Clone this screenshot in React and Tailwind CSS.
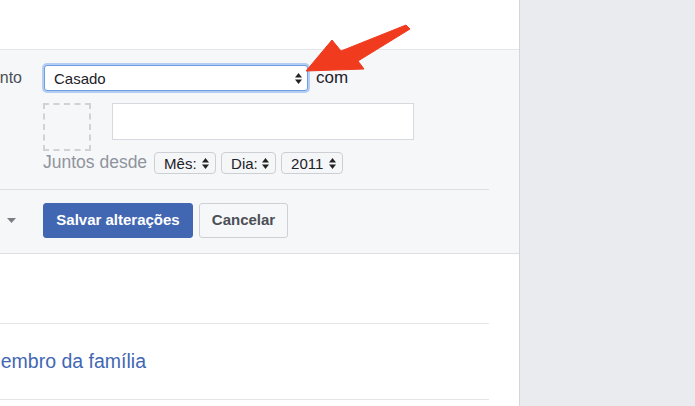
import React from "react";

function Stepper({ className = "" }) {
  return (
    <svg width="7" height="11" viewBox="0 0 7 11" className={className}>
      <path d="M0 4.5 L3.5 0 L7 4.5 Z" fill="#222" />
      <path d="M0 6.5 L3.5 11 L7 6.5 Z" fill="#222" />
    </svg>
  );
}

function SmallSelect({ label, w }) {
  return (
    <div
      className={`flex h-[22px] items-center justify-between rounded-[4px] border border-[#ccd0d5] bg-[#f5f6f7] pl-[9px] pr-[6px] text-[15px] leading-none text-[#1d2129] ${w}`}
    >
      <span>{label}</span>
      <Stepper />
    </div>
  );
}

export default function App() {
  return (
    <div className="relative flex h-[406px] w-[695px] overflow-hidden bg-[#e9ebee] font-['Liberation_Sans',Arial,sans-serif]">
      <div className="flex w-[520px] shrink-0 flex-col border-r border-[#d3d6db] bg-white">
        <div className="h-[50px] shrink-0 border-b border-[#e5e6e9]" />

        <div className="border-b border-[#dddfe2] bg-[#f6f7f9] pr-[30px]">
          <div className="flex pt-[15px]">
            <div className="flex h-[26px] w-[44px] shrink-0 items-center justify-end whitespace-nowrap pr-[22px] text-[16px] text-[#4b4f56]">
              Status de relacionamento
            </div>
            <div className="flex flex-col">
              <div className="flex items-center">
                <div className="flex h-[26px] w-[264px] items-center justify-between rounded-[3px] border border-[#6f9de3] bg-white pl-[9px] pr-[5px] text-[15px] leading-none text-[#1d2129] shadow-[0_0_0_2px_#b4cdf2]">
                  <span>Casado</span>
                  <Stepper />
                </div>
                <span className="ml-[8px] -mt-[2px] text-[17px] leading-none text-[#1d2129]">com</span>
              </div>
            </div>
          </div>

          <div className="flex pl-[43px] pt-[12px]">
            <div className="h-[48px] w-[48px] shrink-0 border-2 border-dashed border-[#d0d2d6]" />
            <div className="ml-[21px] h-[37px] w-[302px] border border-[#d6d9dd] bg-white" />
          </div>

          <div className="flex items-center pl-[43px] pt-[1px]">
            <span className="mr-[7px] whitespace-nowrap text-[17.5px] leading-none text-[#90949c]">Juntos desde</span>
            <div className="flex gap-[5px]">
              <SmallSelect label="Mês:" w="w-[62px]" />
              <SmallSelect label="Dia:" w="w-[55px]" />
              <SmallSelect label="2011" w="w-[62px]" />
            </div>
          </div>

          <div className="mt-[15px] border-t border-[#dddfe2]" />

          <div className="flex items-center pb-[15px] pt-[13px]">
            <div className="flex w-[43px] shrink-0 justify-end pr-[27px]">
              <svg width="9" height="5" viewBox="0 0 9 5">
                <path d="M0 0 L9 0 L4.5 5 Z" fill="#7a7d82" />
              </svg>
            </div>
            <button className="h-[35px] w-[150px] rounded-[3px] border border-[#4267b2] bg-[#4267b2] text-[15px] font-bold text-white">
              Salvar alterações
            </button>
            <button className="ml-[6px] h-[35px] w-[89px] rounded-[3px] border border-[#ced0d4] bg-[#f6f7f9] text-[15px] font-bold text-[#4b4f56]">
              Cancelar
            </button>
          </div>
        </div>

        <div className="mr-[30px] mt-[69px] border-t border-[#e5e5e5]" />
        <div className="flex h-[75px] items-center">
          <div className="flex w-[146px] shrink-0 justify-end whitespace-nowrap text-[19.5px] leading-none text-[#4267b2]">
            Adicionar um membro da família
          </div>
        </div>
        <div className="mr-[30px] border-t border-[#e5e5e5]" />
      </div>
      <div className="flex-1" />

      <svg
        className="pointer-events-none absolute left-0 top-0"
        width="695"
        height="406"
        viewBox="0 0 695 406"
      >
        <polygon
          points="306,71 332,40 341,51 406,25 410,29 358,61 364,69"
          fill="#f03b1f"
          stroke="#f03b1f"
          strokeWidth="1"
          strokeLinejoin="round"
        />
      </svg>
    </div>
  );
}
